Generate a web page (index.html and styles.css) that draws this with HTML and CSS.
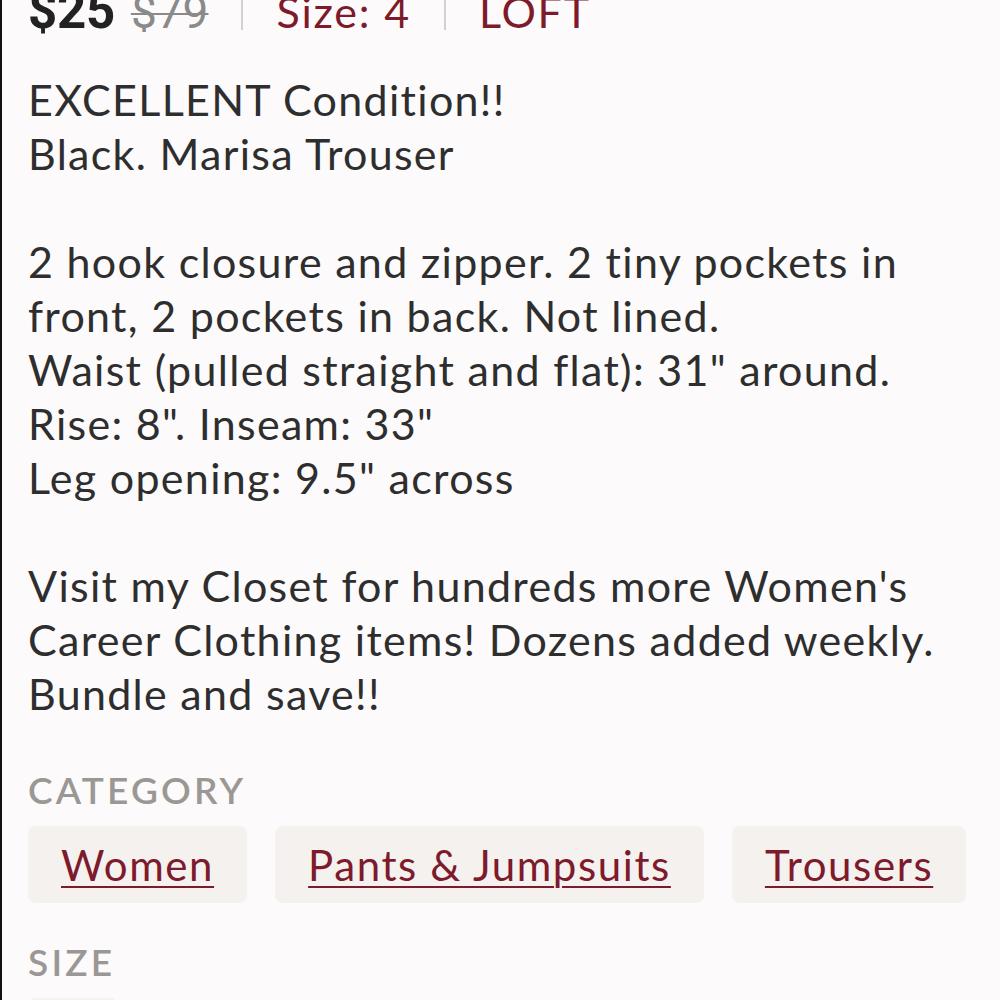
FILE: index.html
```html
<!DOCTYPE html>
<html>
<head>
<meta charset="utf-8">
<link rel="stylesheet" href="styles.css">
</head>
<body>
<div class="page">
  <div class="price-row">
    <span class="price">$25</span>
    <span class="orig">$79</span>
    <span class="sep"></span>
    <span class="meta">Size: 4</span>
    <span class="sep"></span>
    <span class="meta">LOFT</span>
  </div>
  <div class="desc">
    <p>EXCELLENT Condition!!<br>Black. Marisa Trouser</p>
    <p>2 hook closure and zipper. 2 tiny pockets in front, 2 pockets in back. Not lined.<br>Waist (pulled straight and flat): 31" around.<br>Rise: 8". Inseam: 33"<br>Leg opening: 9.5" across</p>
    <p>Visit my Closet for hundreds more Women's Career Clothing items! Dozens added weekly. Bundle and save!!</p>
  </div>
  <div class="label">CATEGORY</div>
  <div class="chips">
    <a class="chip">Women</a>
    <a class="chip">Pants &amp; Jumpsuits</a>
    <a class="chip">Trousers</a>
  </div>
  <div class="label label-size">SIZE</div>
  <div class="chips">
    <a class="chip chip-size">4</a>
  </div>
</div>
</body>
</html>
```
FILE: styles.css
```css
html, body {
  margin: 0;
  padding: 0;
  background: #fcfafa;
}
body {
  border-left: 2px solid #111;
  box-sizing: border-box;
  overflow: hidden;
  height: 1000px;
}
.page {
  padding: 0 35px 0 26px;
  font-family: "Lato", "Noto Sans", sans-serif;
  color: #2b2b2b;
}
.price-row {
  display: flex;
  align-items: baseline;
  height: 50px;
  line-height: 50px;
  margin-top: -14px;
}
.price {
  font-family: "Roboto", sans-serif;
  font-weight: 700;
  font-size: 51px;
  color: #222;
  letter-spacing: -0.3px;
}
.orig {
  font-family: "Roboto", sans-serif;
  font-size: 46px;
  color: #8a8a8a;
  text-decoration: line-through;
  text-decoration-thickness: 2px;
  margin-left: 16px;
}
.sep {
  width: 2px;
  height: 46px;
  background: #d3d0cf;
  margin: 0 33px;
  align-self: flex-end;
  margin-bottom: 6px;
}
.meta {
  font-size: 43px;
  letter-spacing: 1.8px;
  color: #7d1a2c;
}
.desc {
  margin-top: 37px;
  font-size: 43px;
  letter-spacing: 1.3px;
  line-height: 54px;
  color: #2e2e2e;
}
.desc p {
  margin: 0 0 54px 0;
}
.desc p:last-child {
  margin-bottom: 0;
}
.label {
  font-size: 37px;
  letter-spacing: 3.2px;
  color: #9a9794;
  font-weight: 600;
  margin-top: 47px;
  line-height: 44px;
}
.label-size {
  margin-top: 37px;
}
.chips {
  display: flex;
  gap: 28px;
  margin-top: 14px;
}
.chip {
  flex-shrink: 0;
  white-space: nowrap;
  background: #f4f1ee;
  border-radius: 8px;
  padding: 0 33px 0 33px;
  height: 77px;
  display: flex;
  align-items: center;
  font-size: 42px;
  letter-spacing: 1.6px;
  color: #7d1a2c;
  text-decoration: underline;
  text-decoration-thickness: 2px;
  text-underline-offset: 5px;
}
.chip-size {
  width: 90px;
  padding: 0;
  box-sizing: border-box;
  justify-content: center;
}
```
